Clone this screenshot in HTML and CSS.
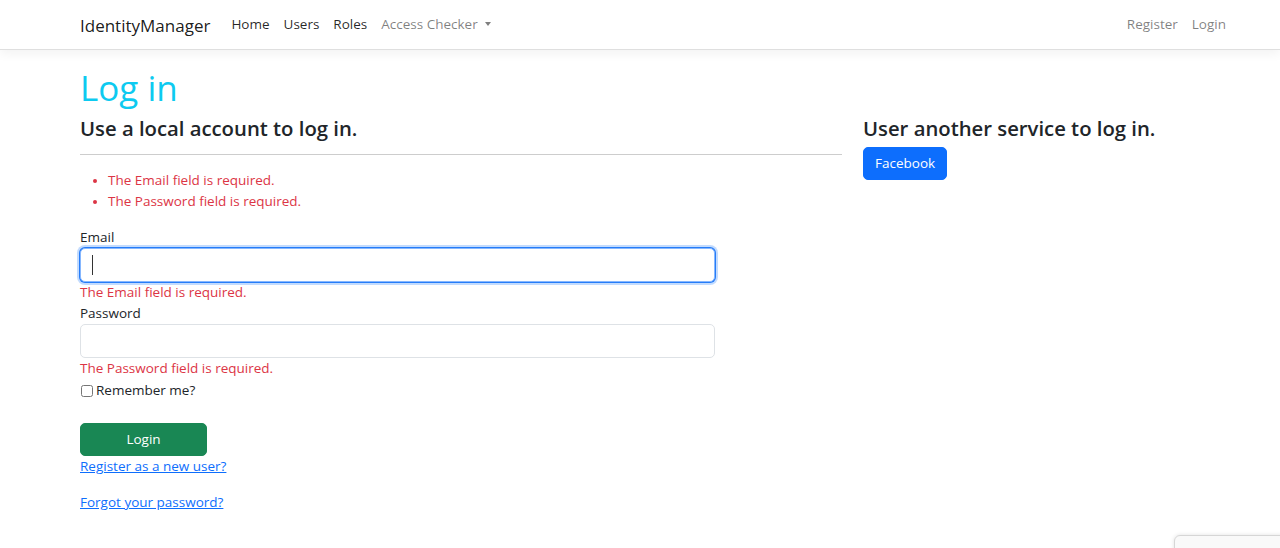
FILE: index.html
```html
<!DOCTYPE html>
<html lang="en">
<head>
<meta charset="utf-8">
<title>Log in - IdentityManager</title>
<link rel="stylesheet" href="styles.css">
</head>
<body>
<header class="navbar">
  <div class="nav-inner">
    <a class="brand" href="#">IdentityManager</a>
    <ul class="nav-list">
      <li><a class="nav-link" href="#">Home</a></li>
      <li><a class="nav-link" href="#">Users</a></li>
      <li><a class="nav-link" href="#">Roles</a></li>
      <li><a class="nav-link muted dropdown" href="#">Access Checker<span class="caret"></span></a></li>
    </ul>
    <ul class="nav-list nav-right">
      <li><a class="nav-link muted" href="#">Register</a></li>
      <li class="last"><a class="nav-link muted" href="#">Login</a></li>
    </ul>
  </div>
</header>

<main class="container">
  <h1 class="title">Log in</h1>
  <div class="row">
    <section class="col-main">
      <h2 class="subtitle">Use a local account to log in.</h2>
      <hr class="rule">
      <ul class="summary">
        <li>The Email field is required.</li>
        <li>The Password field is required.</li>
      </ul>
      <form class="form">
        <label class="label" for="email">Email</label>
        <div class="input focused"><span class="cursor"></span></div>
        <span class="field-error">The Email field is required.</span>
        <label class="label" for="pw">Password</label>
        <div class="input"></div>
        <span class="field-error">The Password field is required.</span>
        <label class="check"><input type="checkbox" class="checkbox"> Remember me?</label>
        <button type="button" class="btn btn-success">Login</button>
        <p class="link-line"><a class="link" href="#">Register as a new user?</a></p>
        <p class="link-line"><a class="link" href="#">Forgot your password?</a></p>
      </form>
    </section>
    <section class="col-side">
      <h3 class="subtitle">User another service to log in.</h3>
      <button type="button" class="btn btn-primary">Facebook</button>
    </section>
  </div>
</main>
<div class="corner-badge"></div>
</body>
</html>
```
FILE: styles.css
```css
* { box-sizing: border-box; }
html, body { margin: 0; padding: 0; }
body {
  font-family: "Open Sans", "Noto Sans", sans-serif;
  font-size: 13.5px;
  line-height: 21px;
  color: #212529;
  background: #fff;
}
a { text-decoration: none; color: inherit; }

.navbar {
  height: 50px;
  background: #fff;
  border-bottom: 1px solid #dfdfdf;
  box-shadow: 0 4px 10px rgba(0,0,0,.05);
}
.nav-inner {
  margin-left: 80px;
  width: 1146px;
  height: 49px;
  display: flex;
  align-items: center;
}
.brand {
  font-size: 17px;
  color: rgba(0,0,0,.9);
  margin-right: 14px;
  padding-top: 1px;
}
.nav-list {
  list-style: none;
  margin: 0;
  padding: 0;
  display: flex;
}
.nav-right { margin-left: auto; }
.nav-link {
  display: block;
  padding: 0 7px;
  color: rgba(0,0,0,.85);
}
.nav-right .last .nav-link { padding-right: 0; }
.nav-link.muted { color: rgba(0,0,0,.5); }
.caret {
  display: inline-block;
  margin-left: 7px;
  vertical-align: 3px;
  border-top: 4px solid rgba(0,0,0,.5);
  border-left: 3.5px solid transparent;
  border-right: 3.5px solid transparent;
}

.container {
  margin-left: 80px;
  width: 1146px;
  padding-top: 17px;
}
.title {
  margin: 0 0 6px;
  font-size: 35px;
  line-height: 42px;
  font-weight: 500;
  color: #0dcaf0;
}
.row {
  display: grid;
  grid-template-columns: 762px 1fr;
  column-gap: 21px;
}
.subtitle {
  margin: 0;
  font-size: 20.3px;
  line-height: 26px;
  font-weight: 600;
  color: #212529;
}
.rule {
  margin: 13px 0 0;
  border: 0;
  border-top: 1px solid #cdcdcd;
}
.summary {
  margin: 15px 0 15px;
  padding-left: 28px;
  color: #dc3545;
}
.summary li::marker { font-size: 12px; }

.form {
  display: flex;
  flex-direction: column;
  align-items: flex-start;
}
.label { display: block; }
.input {
  width: 635px;
  height: 34px;
  border: 1px solid #dee2e6;
  border-radius: 5px;
  background: #fff;
  position: relative;
}
.input.focused {
  border-color: #86b7fe;
  box-shadow: 0 0 0 3px rgba(13,110,253,.25), 0 0 0 1px #2f80f7;
}
.cursor {
  position: absolute;
  left: 11px;
  top: 6px;
  width: 1px;
  height: 20px;
  background: #333;
}
.field-error { color: #dc3545; display: block; }
.check {
  display: flex;
  align-items: center;
  gap: 3px;
  margin-top: 1px;
}
.checkbox {
  margin: 0 0 0 1px;
  width: 12px;
  height: 12px;
}
.btn {
  font-family: inherit;
  font-size: 13.5px;
  line-height: 21px;
  border: 1px solid transparent;
  border-radius: 5px;
  padding: 5px 11px;
  color: #fff;
  cursor: pointer;
}
.btn-success {
  margin-top: 22px;
  width: 127px;
  background: #198754;
  border-color: #198754;
}
.btn-primary {
  margin-top: 6px;
  background: #0d6efd;
  border-color: #0d6efd;
}
.link-line { margin: 0 0 15px; }
.link {
  color: #0d6efd;
  text-decoration: underline;
}

.corner-badge {
  position: fixed;
  left: 1174px;
  top: 535px;
  width: 130px;
  height: 60px;
  background: #f9f9f9;
  border: 1px solid #d6d6d6;
  border-radius: 6px;
  box-shadow: 0 0 4px rgba(0,0,0,.12);
}
```
